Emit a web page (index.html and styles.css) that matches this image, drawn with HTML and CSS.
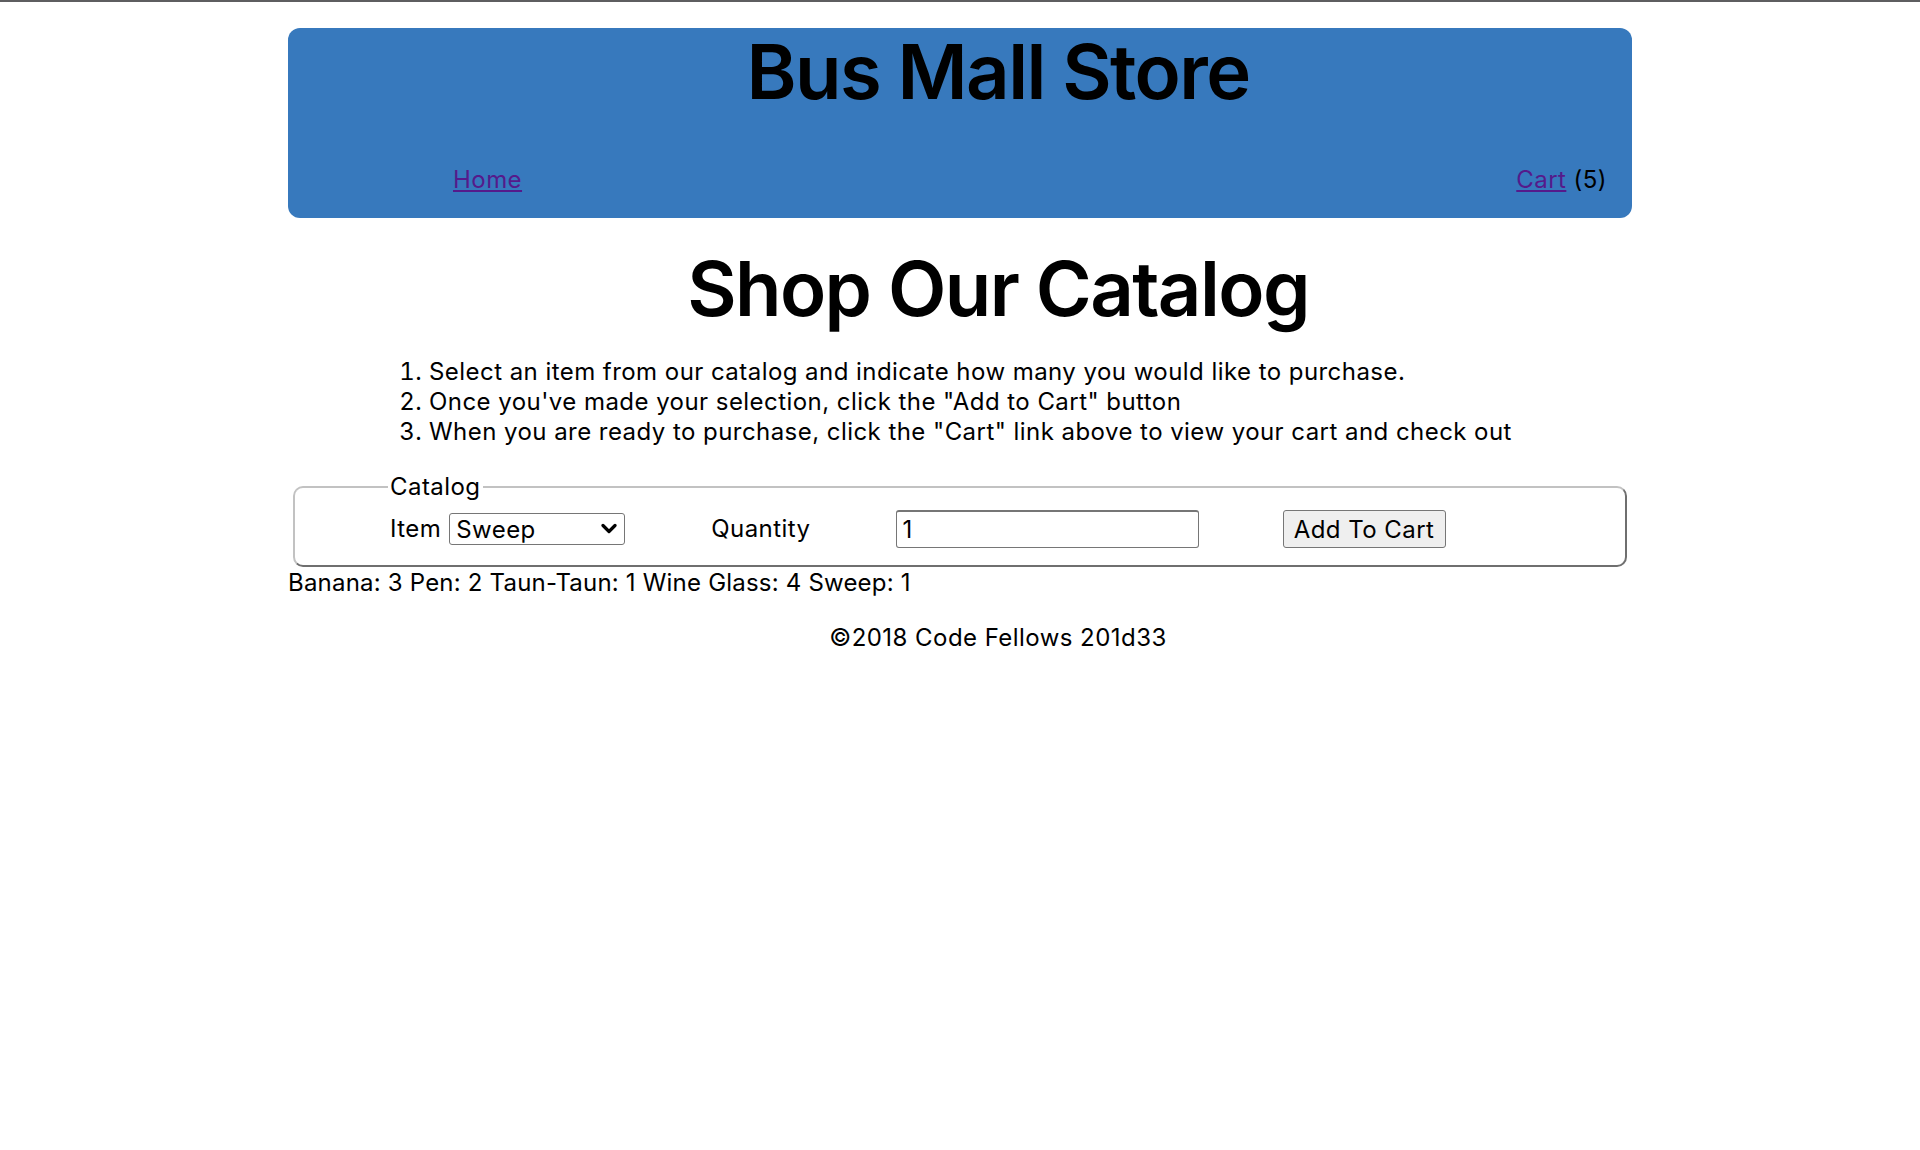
FILE: index.html
```html
<!DOCTYPE html>
<html lang="en">
<head>
<meta charset="utf-8">
<title>Bus Mall Store</title>
<link rel="stylesheet" href="styles.css">
</head>
<body>
<div class="page">
  <header class="site-header">
    <h1 class="site-title">Bus Mall Store</h1>
    <nav class="site-nav">
      <a href="#" class="nav-link">Home</a>
      <span class="cart-nav"><a href="#" class="nav-link">Cart</a> <span class="cart-count">(5)</span></span>
    </nav>
  </header>
  <main>
    <h2 class="page-title">Shop Our Catalog</h2>
    <ol class="steps">
      <li>Select an item from our catalog and indicate how many you would like to purchase.</li>
      <li>Once you've made your selection, click the "Add to Cart" button</li>
      <li>When you are ready to purchase, click the "Cart" link above to view your cart and check out</li>
    </ol>
    <form class="catalog-form">
      <fieldset class="catalog">
        <legend class="catalog-legend">Catalog</legend>
        <div class="catalog-row">
          <label class="field-label" for="items">Item</label>
          <span class="select-wrap">
            <select id="items" class="item-select">
              <option>Banana</option>
              <option>Pen</option>
              <option>Taun-Taun</option>
              <option>Wine Glass</option>
              <option selected>Sweep</option>
            </select>
            <svg class="chevron" width="16" height="11" viewBox="0 0 16 11"><path d="M2 2.5 L8 8.5 L14 2.5" fill="none" stroke="#000" stroke-width="3.2" stroke-linecap="round" stroke-linejoin="round"/></svg>
          </span>
          <label class="field-label qty-label" for="quantity">Quantity</label>
          <input id="quantity" class="qty-input" type="text" value="1">
          <button type="button" class="add-btn">Add To Cart</button>
        </div>
      </fieldset>
    </form>
    <div class="cart-contents">Banana: 3 Pen: 2 Taun-Taun: 1 Wine Glass: 4 Sweep: 1</div>
  </main>
  <footer class="site-footer">©2018 Code Fellows 201d33</footer>
</div>
</body>
</html>
```
FILE: styles.css
```css
html {
  border-top: 2px solid #5e5e60;
}
body {
  margin: 0;
  font-family: Inter, "Noto Sans", sans-serif;
  font-size: 24px;
  letter-spacing: 0.45px;
  color: #000;
  background: #fff;
}
.page {
  width: 70%;
  margin: 0 auto;
}
.site-header {
  margin-top: 26px;
  height: 190px;
  box-sizing: border-box;
  background: #3779bd;
  border-radius: 12px;
  display: flex;
  flex-direction: column;
}
.site-title {
  margin: 0;
  padding: 5px 0 0 76px;
  font-size: 76px;
  font-weight: 600;
  line-height: 76px;
  text-align: center;
  letter-spacing: -1.6px;
}
.site-nav {
  margin-top: auto;
  padding: 0 25px 23px 165px;
  display: flex;
  justify-content: space-between;
  line-height: 30px;
}
.nav-link {
  color: #551a8b;
}
.page-title {
  margin: 25px 0 0;
  padding-left: 76px;
  font-size: 76px;
  font-weight: 600;
  line-height: 90px;
  text-align: center;
  letter-spacing: -1.6px;
}
.steps {
  margin: 24px 0 25px;
  padding-left: 141px;
  line-height: 30px;
}
.catalog-form {
  margin: 0;
}
.catalog {
  margin: 0 5px;
  padding: 8px 20px 17px 95px;
  border: 2px solid;
  border-color: #c2c2c2 #6f6f6f #6f6f6f #c2c2c2;
  border-radius: 10px;
}
.catalog-legend {
  padding: 0 2px;
  margin-left: -2px;
  line-height: 30px;
}
.catalog-row {
  display: flex;
  align-items: center;
}
.field-label {
  line-height: 30px;
}
.select-wrap {
  position: relative;
  display: inline-block;
  margin-left: 8px;
}
.item-select {
  appearance: none;
  -webkit-appearance: none;
  width: 176px;
  height: 32px;
  box-sizing: border-box;
  border: 1px solid #767676;
  border-radius: 3px;
  background: #fff;
  font-family: inherit;
  font-size: 24px;
  letter-spacing: 0.45px;
  color: #000;
  padding: 0 0 0 6px;
  display: block;
}
.chevron {
  position: absolute;
  right: 8px;
  top: 10px;
  pointer-events: none;
}
.qty-label {
  margin-left: 86px;
}
.qty-input {
  margin-left: 85px;
  width: 303px;
  height: 38px;
  box-sizing: border-box;
  border: 1px solid #767676;
  border-top-width: 2px;
  border-radius: 3px;
  font-family: inherit;
  font-size: 24px;
  padding: 0 6px;
  color: #000;
}
.add-btn {
  margin-left: 84px;
  width: 163px;
  height: 38px;
  box-sizing: border-box;
  background: #efefef;
  border: 1px solid #767676;
  border-radius: 3px;
  font-family: inherit;
  font-size: 24px;
  letter-spacing: 0.45px;
  color: #000;
  padding: 0;
}
.cart-contents {
  line-height: 30px;
  margin-top: 1px;
  letter-spacing: 0.2px;
}
.site-footer {
  margin-top: 25px;
  padding-left: 76px;
  text-align: center;
  line-height: 30px;
}
```
